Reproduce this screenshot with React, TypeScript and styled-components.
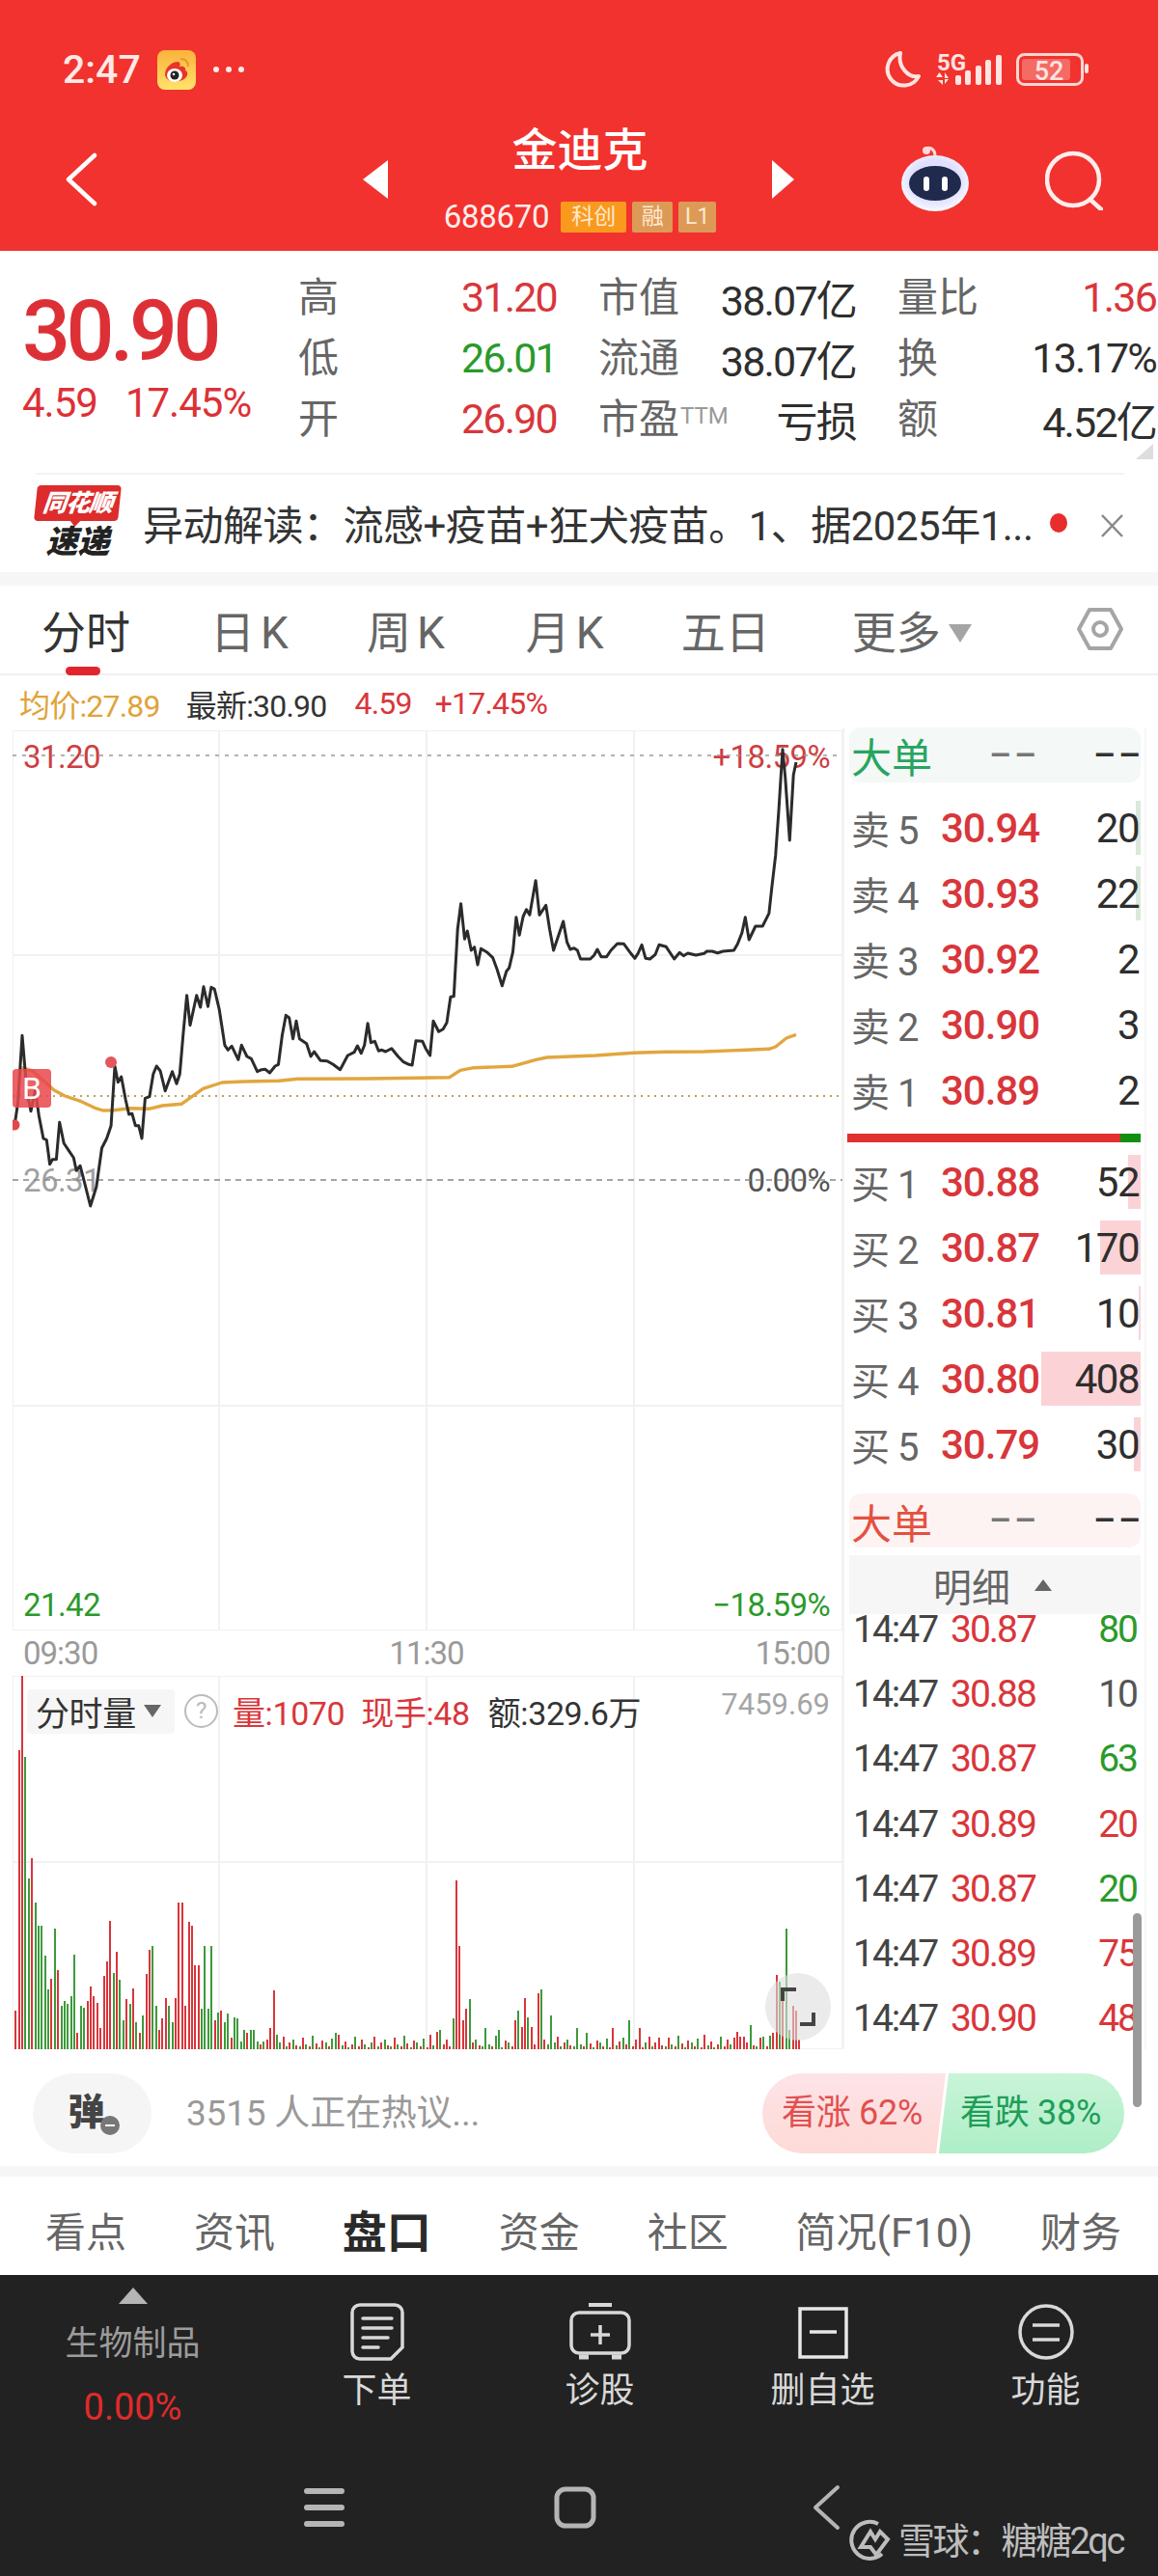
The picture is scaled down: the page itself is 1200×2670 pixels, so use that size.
import React from 'react';
import styled, { createGlobalStyle } from 'styled-components';

const RED = '#d9363b';
const GREEN = '#2a9a2a';
const FONT = 'Roboto, "Noto Sans CJK SC", sans-serif';

const GlobalStyle = createGlobalStyle`
    html, body {
        margin: 0;
        padding: 0;
        background: #fff;
    }
    * {
        box-sizing: border-box;
    }
`;

const Page = styled.div`
    position: relative;
    width: 1200px;
    height: 2670px;
    overflow: hidden;
    background: #fff;
    font-family: ${FONT};
    color: #333;
`;

/* header */
const Header = styled.header`
    height: 260px;
    background: #f2322e;
    color: #fff;
`;

const StatusBar = styled.div`
    height: 130px;
    padding: 14px 72px 0 65px;
    display: flex;
    align-items: center;
`;

const Time = styled.span`
    font-size: 41px;
    font-weight: 500;
    color: #ffe9e6;
    width: 98px;
`;

const Dots = styled.span`
    display: flex;
    gap: 7px;
    margin-left: 18px;
    i {
        width: 6px;
        height: 6px;
        border-radius: 50%;
        background: #ffe9e6;
    }
`;

const StatusRight = styled.div`
    margin-left: auto;
    display: flex;
    align-items: center;
`;

const NavBar = styled.div`
    height: 130px;
    padding: 0 60px 20px 67px;
    display: grid;
    grid-template-columns: 309px 26px 398px 23px 110px 72px 78px 57px;
    align-items: center;
`;

const TitleBlock = styled.div`
    display: flex;
    flex-direction: column;
    align-items: center;
    margin-top: -1px;
`;

const Title = styled.div`
    font-size: 47px;
    line-height: 54px;
    font-weight: 500;
`;

const CodeRow = styled.div`
    display: flex;
    align-items: center;
    gap: 6px;
    margin-top: 25px;
    font-size: 33px;
    line-height: 34px;
    color: #ffeeec;
    letter-spacing: -0.3px;
`;

const Tag = styled.span<{ $bg: string; $w: number }>`
    width: ${p => p.$w}px;
    height: 32px;
    background: ${p => p.$bg};
    color: #ffe9d0;
    font-size: 23px;
    line-height: 32px;
    text-align: center;
    border-radius: 2px;
    letter-spacing: 0;
    &:first-of-type {
        margin-left: 6px;
    }
`;

/* quote */
const Quote = styled.section`
    height: 230px;
    display: flex;
    position: relative;
`;

const PriceCol = styled.div`
    width: 309px;
    padding: 37px 0 0 23px;
    color: #dd3036;
`;

const BigPrice = styled.div`
    font-size: 88px;
    line-height: 92px;
    font-weight: 500;
    letter-spacing: -4.5px;
`;

const PriceDelta = styled.div`
    display: flex;
    gap: 29px;
    margin-top: 6px;
    font-size: 42px;
    line-height: 46px;
    letter-spacing: -1px;
`;

const StatGrid = styled.div`
    display: grid;
    grid-template-columns: 268px 267px 268px;
    column-gap: 43px;
    grid-auto-rows: 63px;
    padding-top: 16px;
`;

const Stat = styled.div`
    display: flex;
    align-items: center;
    justify-content: space-between;
    font-size: 42px;
    color: #666;
    white-space: nowrap;
    sup {
        font-size: 24px;
        color: #999;
        vertical-align: 10px;
        line-height: 0;
        margin-left: 1px;
    }
`;

const StatLabel = styled.span`
    margin-bottom: 6px;
`;

const StatValue = styled.span<{ $color?: string }>`
    font-size: 43px;
    color: ${p => p.$color || '#2e2e2e'};
    letter-spacing: -1.8px;
`;

const CornerMark = styled.div`
    position: absolute;
    right: 5px;
    bottom: 14px;
    width: 0;
    height: 0;
    border-left: 18px solid transparent;
    border-bottom: 16px solid #ddd;
`;

/* news strip */
const News = styled.section`
    height: 103px;
    margin: 0 35px 0 37px;
    border-top: 2px solid #f3f3f3;
    display: flex;
    align-items: center;
    position: relative;
`;

const NewsLogo = styled.div`
    width: 87px;
    margin-right: 24px;
    display: flex;
    flex-direction: column;
    align-items: center;
    transform: translateY(-1px);
`;

const LogoTop = styled.div`
    position: relative;
    width: 87px;
    height: 37px;
    background: #dc2c2c;
    border-radius: 4px;
    color: #fff;
    font-size: 25px;
    line-height: 37px;
    font-weight: 900;
    font-style: italic;
    text-align: center;
    letter-spacing: -1px;
    transform: skewX(-6deg);
    &:after {
        content: '';
        position: absolute;
        left: 37px;
        bottom: -6px;
        border-left: 6px solid transparent;
        border-right: 6px solid transparent;
        border-top: 7px solid #dc2c2c;
    }
`;

const LogoBottom = styled.div`
    font-size: 33px;
    line-height: 38px;
    font-weight: 900;
    font-style: italic;
    color: #222;
    margin-top: 3px;
`;

const NewsText = styled.div`
    font-size: 42px;
    color: #333;
    white-space: nowrap;
    letter-spacing: -0.5px;
    margin-top: -3px;
`;

const RedDot = styled.span`
    position: absolute;
    left: 1051px;
    top: 40px;
    width: 18px;
    height: 20px;
    border-radius: 50%;
    background: #e82d2d;
`;

const CloseIcon = styled.svg`
    position: absolute;
    left: 1103px;
    top: 41px;
`;

const Band = styled.div<{ $h: number }>`
    height: ${p => p.$h}px;
    background: #f6f6f6;
`;

/* chart tabs */
const ChartTabs = styled.nav`
    height: 93px;
    padding: 0 35px 2px 43px;
    display: flex;
    align-items: center;
    border-bottom: 2px solid #f0f0f0;
`;

const ChartTab = styled.span<{ $active?: boolean; $gap: number; $wide?: boolean }>`
    position: relative;
    font-size: 46px;
    color: ${p => (p.$active ? '#333' : '#666')};
    margin-right: ${p => p.$gap}px;
    white-space: nowrap;
    ${p => p.$wide && 'letter-spacing: 6px;'}
    ${p =>
        p.$active &&
        `&:after {
            content: '';
            position: absolute;
            left: 25px;
            bottom: -15px;
            width: 36px;
            height: 9px;
            border-radius: 5px;
            background: #e0262c;
        }`}
`;

const TabCaret = styled.i`
    display: inline-block;
    margin-left: 8px;
    border-left: 12px solid transparent;
    border-right: 12px solid transparent;
    border-top: 19px solid #a5a5a5;
    vertical-align: 6px;
`;

const InfoLine = styled.div`
    height: 54px;
    padding: 3px 0 0 20px;
    display: flex;
    align-items: center;
    font-size: 32px;
    letter-spacing: -0.8px;
`;

const InfoItem = styled.span<{ $color: string; $gap: number }>`
    color: ${p => p.$color};
    margin-right: ${p => p.$gap}px;
`;

/* main area */
const Main = styled.div`
    height: 1370px;
    display: flex;
    padding-left: 13px;
`;

const ChartCol = styled.div`
    width: 860px;
    padding-top: 3px;
`;

const PriceChart = styled.div`
    position: relative;
    height: 933px;
`;

const ChartSvg = styled.svg`
    position: absolute;
    left: 0;
    top: 0;
`;

const ChartLabel = styled.span<{ $color: string; $y: number; $right?: boolean }>`
    position: absolute;
    ${p => (p.$right ? 'right: 13px;' : 'left: 11px;')}
    top: ${p => p.$y}px;
    font-size: 33px;
    line-height: 36px;
    letter-spacing: -0.6px;
    color: ${p => p.$color};
`;

const BuyMark = styled.span`
    position: absolute;
    left: 0;
    top: 351px;
    width: 40px;
    height: 40px;
    border-radius: 4px;
    background: rgba(232, 70, 76, 0.85);
    color: #fff;
    font-size: 32px;
    line-height: 40px;
    text-align: center;
`;

const TimeAxis = styled.div`
    height: 47px;
    padding: 0 13px 0 11px;
    display: flex;
    align-items: center;
    justify-content: space-between;
    font-size: 33px;
    letter-spacing: -1px;
    color: #9a9a9a;
`;

const VolumeChart = styled.div`
    position: relative;
    height: 387px;
`;

const VolumeHead = styled.div`
    position: absolute;
    left: 15px;
    top: 12px;
    display: flex;
    align-items: center;
    font-size: 35px;
    letter-spacing: -0.4px;
    white-space: nowrap;
`;

const VolumeMode = styled.div`
    width: 153px;
    height: 46px;
    padding-left: 9px;
    background: #f6f6f6;
    border-radius: 4px;
    color: #333;
    display: flex;
    align-items: center;
    margin-right: 10px;
    i {
        margin-left: 8px;
        border-left: 9px solid transparent;
        border-right: 9px solid transparent;
        border-top: 13px solid #666;
    }
`;

const HelpMark = styled.span`
    width: 35px;
    height: 35px;
    border: 2px solid #bbb;
    border-radius: 50%;
    color: #bbb;
    font-size: 24px;
    line-height: 31px;
    text-align: center;
    margin-right: 15px;
`;

const VolumeText = styled.span<{ $color: string; $gap: number }>`
    color: ${p => p.$color};
    margin-right: ${p => p.$gap}px;
    font-size: 34px;
`;

const VolumeMax = styled.span`
    position: absolute;
    right: 13px;
    top: 12px;
    font-size: 31px;
    line-height: 36px;
    color: #a5a5a5;
`;

const ExpandButton = styled.div`
    position: absolute;
    left: 780px;
    top: 308px;
    width: 68px;
    height: 70px;
    border-radius: 50%;
    background: rgba(222, 222, 222, 0.6);
    display: flex;
    align-items: center;
    justify-content: center;
`;

/* order book */
const BookCol = styled.aside`
    width: 315px;
    padding-left: 5px;
    border-left: 2px solid #f3f3f3;
    border-right: 2px solid #f6f6f6;
    height: 1370px;
    overflow: hidden;
`;

const BigOrder = styled.div<{ $bg: string; $color: string; $h: number }>`
    height: ${p => p.$h}px;
    width: 302px;
    padding: 0 4px 0 2px;
    background: ${p => p.$bg};
    border-radius: 12px;
    display: flex;
    align-items: center;
    font-size: 42px;
    color: ${p => p.$color};
    b {
        font-weight: 400;
        width: 143px;
        letter-spacing: 0;
    }
`;

const Dash = styled.span<{ $color: string; $w: number }>`
    width: ${p => p.$w}px;
    font-size: 36px;
    font-weight: 500;
    letter-spacing: 3px;
    color: ${p => p.$color};
    white-space: pre;
`;

const BookGroup = styled.div<{ $top: number }>`
    margin-top: ${p => p.$top}px;
`;

const BookRow = styled.div`
    position: relative;
    width: 302px;
    height: 68px;
    padding-left: 2px;
    display: flex;
    align-items: center;
`;

const BookLabel = styled.span`
    width: 93px;
    font-size: 40px;
    color: #666;
    span {
        margin-left: 8px;
    }
`;

const BookPrice = styled.span`
    font-size: 42px;
    font-weight: 500;
    color: ${RED};
    letter-spacing: -1px;
`;

const BookQty = styled.span`
    position: relative;
    margin-left: auto;
    padding-right: 2px;
    font-size: 42px;
    letter-spacing: -1.5px;
    color: #2e2e2e;
`;

const QtyBar = styled.i<{ $bg: string }>`
    position: absolute;
    right: 0;
    top: 6px;
    bottom: 6px;
    background: ${p => p.$bg};
`;

const Ratio = styled.div`
    margin-top: 11px;
    width: 304px;
    margin-left: -2px;
    height: 9px;
    display: flex;
    background: #e03030;
    i {
        margin-left: auto;
        width: 21px;
        background: #109010;
    }
`;

const DetailHead = styled.div`
    margin-top: 8px;
    width: 302px;
    height: 61px;
    background: #f6f6f6;
    display: flex;
    align-items: center;
    padding-left: 87px;
    font-size: 40px;
    color: #666;
    i {
        margin-left: 25px;
        border-left: 9px solid transparent;
        border-right: 9px solid transparent;
        border-bottom: 12px solid #666;
    }
`;

const TradeRow = styled.div`
    width: 302px;
    height: 67.2px;
    padding: 0 4px;
    display: flex;
    font-size: 39px;
    line-height: 32px;
    letter-spacing: -2px;
`;

const TradeTime = styled.span`
    width: 101px;
    color: #444;
`;

const TradePrice = styled.span`
    color: ${RED};
`;

const TradeQty = styled.span<{ $color: string }>`
    margin-left: auto;
    color: ${p => p.$color};
`;

const ScrollThumb = styled.div`
    position: absolute;
    left: 1174px;
    top: 1983px;
    width: 9px;
    height: 201px;
    border-radius: 5px;
    background: #9a9a9a;
`;

/* comment bar */
const CommentBar = styled.div`
    height: 121px;
    padding: 25px 35px 0 34px;
    display: flex;
    align-items: flex-start;
`;

const DanmuButton = styled.div`
    position: relative;
    width: 123px;
    height: 83px;
    border-radius: 42px;
    background: #f5f5f5;
    text-align: center;
    font-size: 38px;
    line-height: 80px;
    font-weight: 900;
    color: #444;
    padding-right: 12px;
`;

const DanmuOff = styled.i`
    position: absolute;
    left: 70px;
    top: 44px;
    width: 20px;
    height: 20px;
    border-radius: 50%;
    background: #777;
    &:after {
        content: '';
        position: absolute;
        left: 5px;
        top: 9px;
        width: 10px;
        height: 2px;
        background: #fff;
    }
`;

const CommentHint = styled.div`
    margin-left: 36px;
    font-size: 37px;
    line-height: 83px;
    color: #999;
    letter-spacing: -0.2px;
`;

const Sentiment = styled.div`
    margin-left: auto;
    display: flex;
`;

const SentimentSide = styled.div<{ $up?: boolean }>`
    height: 83px;
    font-size: 36px;
    line-height: 82px;
    letter-spacing: -0.3px;
    white-space: nowrap;
    ${p =>
        p.$up
            ? `width: 190px;
               padding-left: 20px;
               color: #e2504f;
               background: linear-gradient(#fde3e8, #fddad6);
               border-radius: 42px 0 0 42px;
               clip-path: polygon(0 0, 100% 0, calc(100% - 10px) 100%, 0 100%);`
            : `width: 192px;
               margin-left: -7px;
               padding-left: 22px;
               color: #1f9e58;
               background: linear-gradient(#c9f4d8, #aeeec6);
               border-radius: 0 42px 42px 0;
               clip-path: polygon(10px 0, 100% 0, 100% 100%, 0 100%);`}
`;

/* bottom tabs */
const BottomTabs = styled.nav`
    height: 102px;
    padding: 6px 38px 0 47px;
    display: flex;
    align-items: center;
    justify-content: space-between;
    font-size: 42px;
    color: #666;
`;

const BottomTab = styled.span<{ $active?: boolean }>`
    ${p => p.$active && 'color: #2a2a2a; font-weight: 700; font-size: 46px;'}
`;

/* dark dock */
const Dock = styled.div`
    height: 312px;
    background: #222;
    color: #ddd;
`;

const DockRow = styled.div`
    height: 182px;
    display: flex;
`;

const SectorCell = styled.div`
    width: 275px;
    padding-top: 13px;
    display: flex;
    flex-direction: column;
    align-items: center;
`;

const SectorCaret = styled.i`
    border-left: 15px solid transparent;
    border-right: 15px solid transparent;
    border-bottom: 17px solid #b5b5b5;
`;

const SectorName = styled.div`
    margin-top: 20px;
    font-size: 35px;
    line-height: 44px;
    color: #9c9c9c;
`;

const SectorChange = styled.div`
    margin-top: 20px;
    font-size: 38px;
    line-height: 46px;
    color: #e12a2a;
`;

const DockItem = styled.div`
    width: 231px;
    padding-top: 29px;
    display: flex;
    flex-direction: column;
    align-items: center;
`;

const DockIcon = styled.svg`
    display: block;
`;

const DockLabel = styled.div`
    margin-top: 11px;
    font-size: 36px;
    line-height: 40px;
    color: #d8d8d8;
`;

const SystemNav = styled.div`
    height: 130px;
    padding: 0 0 12px 315px;
    display: flex;
    align-items: center;
    gap: 217px;
`;

const Watermark = styled.div`
    position: absolute;
    left: 880px;
    top: 2606px;
    display: flex;
    align-items: center;
    gap: 7px;
    font-size: 38px;
    line-height: 46px;
    color: #bdbdbd;
    white-space: nowrap;
    letter-spacing: -2.5px;
    span {
        margin-top: 5px;
    }
`;

// chart traces, measured in the coordinates of the reference crop
const PRICE_TRACE = [
    27,1278,33,1210,41,1000,46,1100,50,1180,57,1235,65,1170,72,1250,80,1320,86,1325,92,1400,97,1385,104,1385,110,1270,118,1335,128,1360,136,1380,141,1420,148,1405,155,1450,167,1530,178,1470,188,1350,197,1320,205,1280,212,1095,218,1145,224,1128,232,1200,238,1245,244,1243,250,1280,256,1280,262,1320,268,1195,276,1190,283,1120,289,1095,296,1110,305,1172,318,1112,326,1150,332,1120,338,1000,345,875,351,968,363,875,370,912,376,848,384,910,390,850,396,855,405,920,415,1030,421,1045,428,1033,440,1075,446,1030,456,1065,464,1072,475,1112,483,1106,490,1105,498,1116,508,1095,514,1090,521,1000,528,937,534,945,541,1010,547,955,553,1010,566,1025,574,1065,580,1050,592,1078,604,1079,615,1090,628,1106,642,1062,654,1052,660,1032,667,1055,673,1030,679,962,685,1022,692,1018,699,1048,705,1045,712,1050,723,1040,735,1065,745,1082,755,1090,761,1092,768,1016,780,1018,786,1040,794,1062,800,955,810,988,818,980,825,960,832,880,838,878,845,670,851,590,858,700,863,675,870,735,876,725,882,780,888,730,900,742,910,758,918,795,927,845,935,800,940,790,947,740,953,632,959,688,966,630,972,608,978,625,989,518,996,625,1008,595,1015,670,1022,735,1040,645,1047,710,1053,732,1060,728,1066,735,1072,762,1090,762,1097,750,1103,732,1110,755,1120,755,1128,735,1140,714,1152,715,1165,745,1172,760,1178,745,1185,718,1192,760,1200,762,1210,748,1217,718,1230,724,1245,762,1255,742,1262,752,1270,744,1285,750,1300,745,1305,738,1315,738,1325,743,1335,738,1355,735,1362,715,1370,680,1376,632,1383,702,1395,660,1408,660,1420,620,1425,540,1432,440,1438,300,1445,110,1450,200,1458,393,1465,190,1470,150,
];

const AVG_TRACE = [
    40,1100,60,1110,80,1140,100,1170,120,1188,150,1205,175,1225,190,1233,210,1232,240,1226,275,1228,300,1218,335,1213,350,1195,375,1165,410,1146,450,1143,515,1141,550,1135,680,1134,830,1130,850,1108,875,1100,945,1096,990,1075,1010,1068,1100,1062,1170,1054,1230,1051,1300,1050,1420,1042,1432,1035,1452,1008,1470,997,
];

const toPoints = (trace: number[]) => {
    const out: string[] = [];
    for (let i = 0; i < trace.length; i += 2) {
        out.push(`${(trace[i] / 1.7818 - 13).toFixed(1)},${(trace[i + 1] / 3 - 17).toFixed(1)}`);
    }
    return out.join(' ');
};

// positive is a red bar, negative a green one
const OPENING_BARS = [
    120,930,1160,-910,-530,595,-455,-385,-385,-290,-185,220,-375,245,-135,-150,-140,-165,-295,50,-135,-130,150,195,165,145,65,228,272,398,-238,302,-215,-90,155,-140,190,-85,50,-105,235,310,-320,-135,60,95,160,-135,-85,160,455,455,135,395,385,262,260,-125,-322,-125,-320,90,-115,120,-85,-112,35,-100,-95,-25,-60,50,-60,-60,-25,15,-25,30,65,182,-45,
];

const LOW_BARS = [22,-30,12,-8,35,-15,8,-42,18,-5,28,-20,10,-34,6,45,-12,25,-6,16,-38,9,30,-14,5,-20,40,-10];

const SPIKES: Record<number, number> = {
    98: -50, 129: 55, 130: -60, 132: 30, 134: -95, 135: 525, 136: 322, 137: 90, 138: 125, 139: -155, 144: -65, 148: -60,
    153: 90, 154: -120, 155: 70, 156: 160, 157: -100, 158: 70, 160: 175, 161: -185, 162: 30, 164: -105, 172: -65, 175: -50,
    183: 65, 186: -35, 188: -90, 191: 65, 197: 35, 220: 35, 221: 55, 223: 40, 225: -75, 229: -40, 232: 50, 233: 230, 234: -210,
    235: 170, 236: -375, 237: -60, 238: 135, 239: 120, 240: 30,
};

const volumeBars = () => {
    const bars = [];
    for (let i = 0; i <= 240; i++) {
        const v = i < OPENING_BARS.length ? OPENING_BARS[i] : SPIKES[i] ?? LOW_BARS[i % LOW_BARS.length];
        const h = Math.round(Math.abs(v) / 3);
        bars.push(
            <rect
                key={i}
                x={Math.round(2.2 + i * 3.384)}
                y={387 - h}
                width={2}
                height={h}
                fill={v > 0 ? '#d8353b' : '#3d9a3a'}
                shapeRendering="crispEdges"
            />
        );
    }
    return bars;
};

const GridLines: React.FC<{ height: number; rows: number[] }> = ({ height, rows }) => (
    <g stroke="#f1f1f1" strokeWidth="2" fill="none">
        <rect x="0" y="0" width="860" height={height} />
        <line x1="214" x2="214" y1="0" y2={height} />
        <line x1="429" x2="429" y1="0" y2={height} />
        <line x1="644" x2="644" y1="0" y2={height} />
        {rows.map(y => (
            <line key={y} x1="0" x2="860" y1={y} y2={y} />
        ))}
    </g>
);

const ASKS = [
    { n: 5, price: '30.94', qty: 20, bar: 5 },
    { n: 4, price: '30.93', qty: 22, bar: 5 },
    { n: 3, price: '30.92', qty: 2, bar: 0 },
    { n: 2, price: '30.90', qty: 3, bar: 0 },
    { n: 1, price: '30.89', qty: 2, bar: 0 },
];

const BIDS = [
    { n: 1, price: '30.88', qty: 52, bar: 13 },
    { n: 2, price: '30.87', qty: 170, bar: 42 },
    { n: 3, price: '30.81', qty: 10, bar: 2 },
    { n: 4, price: '30.80', qty: 408, bar: 103 },
    { n: 5, price: '30.79', qty: 30, bar: 7 },
];

const TRADES = [
    { price: '30.87', qty: 80, color: GREEN },
    { price: '30.88', qty: 10, color: '#555' },
    { price: '30.87', qty: 63, color: GREEN },
    { price: '30.89', qty: 20, color: RED },
    { price: '30.87', qty: 20, color: GREEN },
    { price: '30.89', qty: 75, color: RED },
    { price: '30.90', qty: 48, color: RED },
];

const STATS = [
    { label: '高', value: '31.20', color: RED },
    { label: '市值', value: '38.07亿' },
    { label: '量比', value: '1.36', color: RED },
    { label: '低', value: '26.01', color: GREEN },
    { label: '流通', value: '38.07亿' },
    { label: '换', value: '13.17%' },
    { label: '开', value: '26.90', color: RED },
    { label: '市盈', sup: 'TTM', value: '亏损' },
    { label: '额', value: '4.52亿' },
];

const WeiboIcon = () => (
    <svg width="40" height="41" viewBox="0 0 40 41">
        <defs>
            <linearGradient id="wb" x1="0" y1="0" x2="0" y2="1">
                <stop offset="0" stopColor="#fbb23c" />
                <stop offset="1" stopColor="#ffe36a" />
            </linearGradient>
        </defs>
        <rect width="40" height="41" rx="8" fill="url(#wb)" />
        <path d="M8 25c0-7 7-13 13-13 3 0 3 3 2 5 4-1 7 1 6 4 3 1 3 5 0 8-5 5-21 5-21-4z" fill="#e8352c" />
        <ellipse cx="18" cy="26" rx="8" ry="7" fill="#fff" />
        <circle cx="18" cy="26" r="4.5" fill="#222" />
        <circle cx="17" cy="25" r="1.3" fill="#fff" />
        <path d="M24 9c5 0 8 3 8 8" stroke="#e8972c" strokeWidth="2" fill="none" />
    </svg>
);

const StatusIcons = () => (
    <svg width="211" height="40" viewBox="917 52 211 40" fill="#ffe4e0">
        <path d="M933 55a17 17 0 1 0 19 24c-10 2-22-9-19-24z" fill="none" stroke="#ffe4e0" strokeWidth="4" strokeLinejoin="round" />
        <text x="971" y="73" fontFamily="Roboto, sans-serif" fontWeight="700" fontSize="24">5G</text>
        <path d="M970 80h7l-3.500-5zM972 83h5v5zM979 75l4 6h-4zM979 82h4l-4 5z" />
        <rect x="990" y="78" width="6" height="10" rx="2" />
        <rect x="1000" y="73" width="6" height="15" rx="2" />
        <rect x="1011" y="68" width="6" height="20" rx="2" />
        <rect x="1021" y="62" width="6" height="26" rx="2" />
        <rect x="1032" y="57" width="6" height="31" rx="2" />
        <rect x="1054.500" y="56.500" width="67" height="31" rx="7" fill="none" stroke="#ffd6d0" strokeWidth="3" />
        <rect x="1059" y="61" width="50" height="22" rx="3" fill="#f46a64" />
        <text x="1087" y="83" textAnchor="middle" fontFamily="Roboto, sans-serif" fontWeight="500" fontSize="27">52</text>
        <rect x="1124" y="66" width="4" height="10" rx="2" />
    </svg>
);

const RobotIcon = () => (
    <svg width="72" height="72" viewBox="933 150 72 72">
        <defs>
            <radialGradient id="rb" cx="0.5" cy="0.45" r="0.6">
                <stop offset="0.6" stopColor="#dfe0ff" />
                <stop offset="1" stopColor="#fff" />
            </radialGradient>
        </defs>
        <path d="M958 156c3-5 11-3 11 6" fill="none" stroke="#ffd9d9" strokeWidth="3" />
        <circle cx="960" cy="156" r="4" fill="#ffdada" />
        <ellipse cx="969" cy="190" rx="35" ry="29" fill="url(#rb)" />
        <ellipse cx="969" cy="190" rx="27" ry="18" fill="#1f2a4c" />
        <rect x="957" y="183" width="6" height="15" rx="3" fill="#fff" />
        <rect x="976" y="183" width="6" height="15" rx="3" fill="#fff" />
    </svg>
);

const OrderIcon = () => (
    <DockIcon width="56" height="60" viewBox="0 0 56 60" fill="none" stroke="#d8d8d8" strokeWidth="3.5" strokeLinecap="round">
        <path d="M10 2h36a8 8 0 0 1 8 8v36l-12 12H10a8 8 0 0 1-8-8V10a8 8 0 0 1 8-8z" />
        <path d="M13 16h30M13 26h30M13 36h26M13 46h16" />
    </DockIcon>
);

const DiagnoseIcon = () => (
    <DockIcon width="64" height="60" viewBox="0 0 64 60" fill="none" stroke="#d8d8d8" strokeWidth="3.5">
        <path d="M20 2h24" strokeWidth="4" />
        <rect x="2" y="10" width="60" height="42" rx="8" />
        <path d="M32 23v20M22 33h20" />
        <path d="M10 56h10M44 56h10" strokeWidth="5" />
    </DockIcon>
);

const RemoveIcon = () => (
    <DockIcon width="52" height="60" viewBox="0 0 52 60" fill="none" stroke="#e8e8e8" strokeWidth="3.5">
        <rect x="2" y="6" width="48" height="50" />
        <path d="M12 30h28" />
    </DockIcon>
);

const MenuIcon = () => (
    <DockIcon width="60" height="60" viewBox="0 0 60 60" fill="none" stroke="#d8d8d8" strokeWidth="3.5">
        <circle cx="30" cy="30" r="27" />
        <path d="M16 23h28M16 38h28" />
    </DockIcon>
);

const App: React.FC = () => (
    <Page>
        <GlobalStyle />
        <Header>
            <StatusBar>
                <Time>2:47</Time>
                <WeiboIcon />
                <Dots>
                    <i />
                    <i />
                    <i />
                </Dots>
                <StatusRight>
                    <StatusIcons />
                </StatusRight>
            </StatusBar>
            <NavBar>
                <svg width="34" height="56" viewBox="0 0 34 56" fill="none" stroke="#fff" strokeWidth="4.500" strokeLinecap="round" strokeLinejoin="round">
                    <path d="M31 3L4 28l27 25" />
                </svg>
                <svg width="26" height="40" viewBox="0 0 26 40" fill="#fff">
                    <path d="M26 0v40L0 20z" />
                </svg>
                <TitleBlock>
                    <Title>金迪克</Title>
                    <CodeRow>
                        688670
                        <Tag $bg="#f99a1e" $w={68}>科创</Tag>
                        <Tag $bg="#dd9a57" $w={42}>融</Tag>
                        <Tag $bg="#dd9a57" $w={39}>L1</Tag>
                    </CodeRow>
                </TitleBlock>
                <svg width="23" height="40" viewBox="0 0 23 40" fill="#fff">
                    <path d="M0 0v40l23-20z" />
                </svg>
                <span />
                <RobotIcon />
                <span />
                <svg width="60" height="64" viewBox="1081 154 60 64" fill="none" stroke="#ffeeee" strokeWidth="4.500" strokeLinecap="round">
                    <circle cx="1110" cy="186" r="27" />
                    <path d="M1128 207l11 10" />
                </svg>
            </NavBar>
        </Header>

        <Quote>
            <PriceCol>
                <BigPrice>30.90</BigPrice>
                <PriceDelta>
                    <span>4.59</span>
                    <span>17.45%</span>
                </PriceDelta>
            </PriceCol>
            <StatGrid>
                {STATS.map(s => (
                    <Stat key={s.label}>
                        <StatLabel>
                            {s.label}
                            {s.sup && <sup>{s.sup}</sup>}
                        </StatLabel>
                        <StatValue $color={s.color}>{s.value}</StatValue>
                    </Stat>
                ))}
            </StatGrid>
            <CornerMark />
        </Quote>

        <News>
            <NewsLogo>
                <LogoTop>同花顺</LogoTop>
                <LogoBottom>速递</LogoBottom>
            </NewsLogo>
            <NewsText>异动解读：流感+疫苗+狂犬疫苗。1、据2025年1...</NewsText>
            <RedDot />
            <CloseIcon width="25" height="24" viewBox="0 0 25 24" fill="none" stroke="#888" strokeWidth="2.500">
                <path d="M2 1l21 22M23 1L2 23" />
            </CloseIcon>
        </News>
        <Band $h={14} />

        <ChartTabs>
            <ChartTab $active $gap={83}>分时</ChartTab>
            <ChartTab $wide $gap={75}>日K</ChartTab>
            <ChartTab $wide $gap={78}>周K</ChartTab>
            <ChartTab $wide $gap={74}>月K</ChartTab>
            <ChartTab $gap={85}>五日</ChartTab>
            <ChartTab $gap={0}>
                更多
                <TabCaret />
            </ChartTab>
            <svg style={{ marginLeft: 'auto' }} width="50" height="46" viewBox="0 0 50 46" fill="none" stroke="#a5a5a5" strokeWidth="4">
                <path d="M14 3h22l11 20-11 20H14L3 23z" strokeLinejoin="round" />
                <circle cx="25" cy="23" r="7" />
            </svg>
        </ChartTabs>

        <InfoLine>
            <InfoItem $color="#dfa33a" $gap={27}>均价:27.89</InfoItem>
            <InfoItem $color="#333" $gap={29}>最新:30.90</InfoItem>
            <InfoItem $color={RED} $gap={24}>4.59</InfoItem>
            <InfoItem $color={RED} $gap={0}>+17.45%</InfoItem>
        </InfoLine>

        <Main>
            <ChartCol>
                <PriceChart>
                    <ChartLabel $color="#cf3d42" $y={10}>31.20</ChartLabel>
                    <ChartLabel $color="#cf3d42" $y={10} $right>+18.59%</ChartLabel>
                    <ChartLabel $color="#a0a0a0" $y={449}>26.31</ChartLabel>
                    <ChartLabel $color="#555" $y={449} $right>0.00%</ChartLabel>
                    <ChartLabel $color="#2a9a2a" $y={889}>21.42</ChartLabel>
                    <ChartLabel $color="#2a9a2a" $y={889} $right>−18.59%</ChartLabel>
                    <ChartSvg width="860" height="933" viewBox="0 0 860 933" fill="none">
                        <GridLines height={933} rows={[233, 700]} />
                        <line x1="0" x2="860" y1="26" y2="26" stroke="#999" strokeWidth="1.500" strokeDasharray="4 6" />
                        <line x1="0" x2="860" y1="466" y2="466" stroke="#888" strokeWidth="1.500" strokeDasharray="6 5" />
                        <line x1="0" x2="860" y1="379" y2="379" stroke="#b8a25c" strokeWidth="2" strokeDasharray="2 5" />
                        <polyline points={toPoints(AVG_TRACE)} stroke="#e2a63f" strokeWidth="3.400" strokeLinejoin="round" />
                        <polyline points={toPoints(PRICE_TRACE)} stroke="#2b2b2b" strokeWidth="3" strokeLinejoin="round" />
                    </ChartSvg>
                    <BuyMark>B</BuyMark>
                    <ChartSvg width="860" height="933" viewBox="0 0 860 933">
                        <circle cx="2" cy="409" r="5.500" fill="#e2474c" />
                        <circle cx="102" cy="344" r="6" fill="#e4575b" />
                    </ChartSvg>
                </PriceChart>
                <TimeAxis>
                    <span>09:30</span>
                    <span>11:30</span>
                    <span>15:00</span>
                </TimeAxis>
                <VolumeChart>
                    <ChartSvg width="860" height="387" viewBox="0 0 860 387">
                        <GridLines height={387} rows={[193]} />
                        {volumeBars()}
                    </ChartSvg>
                    <VolumeHead>
                        <VolumeMode>
                            分时量
                            <i />
                        </VolumeMode>
                        <HelpMark>?</HelpMark>
                        <VolumeText $color={RED} $gap={17}>量:1070</VolumeText>
                        <VolumeText $color={RED} $gap={19}>现手:48</VolumeText>
                        <VolumeText $color="#333" $gap={0}>额:329.6万</VolumeText>
                    </VolumeHead>
                    <VolumeMax>7459.69</VolumeMax>
                    <ExpandButton>
                        <svg width="36" height="40" viewBox="0 0 36 40" fill="none" stroke="#444" strokeWidth="4">
                            <path d="M2 14V2h14M34 26v12H20" />
                        </svg>
                    </ExpandButton>
                </VolumeChart>
            </ChartCol>

            <BookCol>
                <BigOrder $bg="#f4f8f6" $color="#27a560" $h={57}>
                    <b>大单</b>
                    <Dash $color="#777" $w={108}>––</Dash>
                    <Dash $color="#333" $w={45}>––</Dash>
                </BigOrder>
                <BookGroup $top={13}>
                    {ASKS.map(a => (
                        <BookRow key={a.n}>
                            <BookLabel>
                                卖<span>{a.n}</span>
                            </BookLabel>
                            <BookPrice>{a.price}</BookPrice>
                            {a.bar > 0 && <QtyBar $bg="#dbe8db" style={{ width: a.bar }} />}
                            <BookQty>{a.qty}</BookQty>
                        </BookRow>
                    ))}
                </BookGroup>
                <Ratio>
                    <i />
                </Ratio>
                <BookGroup $top={7}>
                    {BIDS.map(b => (
                        <BookRow key={b.n}>
                            <BookLabel>
                                买<span>{b.n}</span>
                            </BookLabel>
                            <BookPrice>{b.price}</BookPrice>
                            <QtyBar $bg="#fbd3d6" style={{ width: b.bar }} />
                            <BookQty>{b.qty}</BookQty>
                        </BookRow>
                    ))}
                </BookGroup>
                <BookGroup $top={17}>
                    <BigOrder $bg="#fdf3f3" $color="#e4513f" $h={56}>
                        <b>大单</b>
                        <Dash $color="#777" $w={108}>––</Dash>
                        <Dash $color="#333" $w={45}>––</Dash>
                    </BigOrder>
                </BookGroup>
                <DetailHead>
                    明细
                    <i />
                </DetailHead>
                {TRADES.map((t, i) => (
                    <TradeRow key={i}>
                        <TradeTime>14:47</TradeTime>
                        <TradePrice>{t.price}</TradePrice>
                        <TradeQty $color={t.color}>{t.qty}</TradeQty>
                    </TradeRow>
                ))}
            </BookCol>
        </Main>

        <CommentBar>
            <DanmuButton>
                弹
                <DanmuOff />
            </DanmuButton>
            <CommentHint>3515 人正在热议...</CommentHint>
            <Sentiment>
                <SentimentSide $up>看涨 62%</SentimentSide>
                <SentimentSide>看跌 38%</SentimentSide>
            </Sentiment>
        </CommentBar>
        <Band $h={11} />

        <BottomTabs>
            <BottomTab>看点</BottomTab>
            <BottomTab>资讯</BottomTab>
            <BottomTab $active>盘口</BottomTab>
            <BottomTab>资金</BottomTab>
            <BottomTab>社区</BottomTab>
            <BottomTab>简况(F10)</BottomTab>
            <BottomTab>财务</BottomTab>
        </BottomTabs>

        <Dock>
            <DockRow>
                <SectorCell>
                    <SectorCaret />
                    <SectorName>生物制品</SectorName>
                    <SectorChange>0.00%</SectorChange>
                </SectorCell>
                <DockItem>
                    <OrderIcon />
                    <DockLabel>下单</DockLabel>
                </DockItem>
                <DockItem>
                    <DiagnoseIcon />
                    <DockLabel>诊股</DockLabel>
                </DockItem>
                <DockItem>
                    <RemoveIcon />
                    <DockLabel>删自选</DockLabel>
                </DockItem>
                <DockItem>
                    <MenuIcon />
                    <DockLabel>功能</DockLabel>
                </DockItem>
            </DockRow>
            <SystemNav>
                <svg width="42" height="40" viewBox="0 0 42 40" fill="#b5b5b5">
                    <rect y="0" width="42" height="6" rx="3" />
                    <rect y="17" width="42" height="6" rx="3" />
                    <rect y="34" width="42" height="6" rx="3" />
                </svg>
                <svg width="44" height="44" viewBox="0 0 44 44" fill="none" stroke="#b5b5b5" strokeWidth="5">
                    <rect x="3" y="3" width="38" height="38" rx="9" />
                </svg>
            </SystemNav>
        </Dock>

        <ScrollThumb />
        <svg style={{ position: 'absolute', left: 841, top: 2575 }} width="30" height="48" viewBox="0 0 30 48" fill="none" stroke="#b5b5b5" strokeWidth="4" strokeLinecap="round" strokeLinejoin="round">
            <path d="M27 3L4 24l23 21" />
        </svg>
        <Watermark>
            <svg width="44" height="44" viewBox="0 0 44 44" fill="none" stroke="#bdbdbd" strokeWidth="4">
                <path d="M30 6a19 19 0 1 0 4 31" />
                <path d="M12 30l10-16 5 8 5-8 8 8-12 16-6-8z" />
            </svg>
            <span>雪球：糖糖2qc</span>
        </Watermark>
    </Page>
);

export default App;
